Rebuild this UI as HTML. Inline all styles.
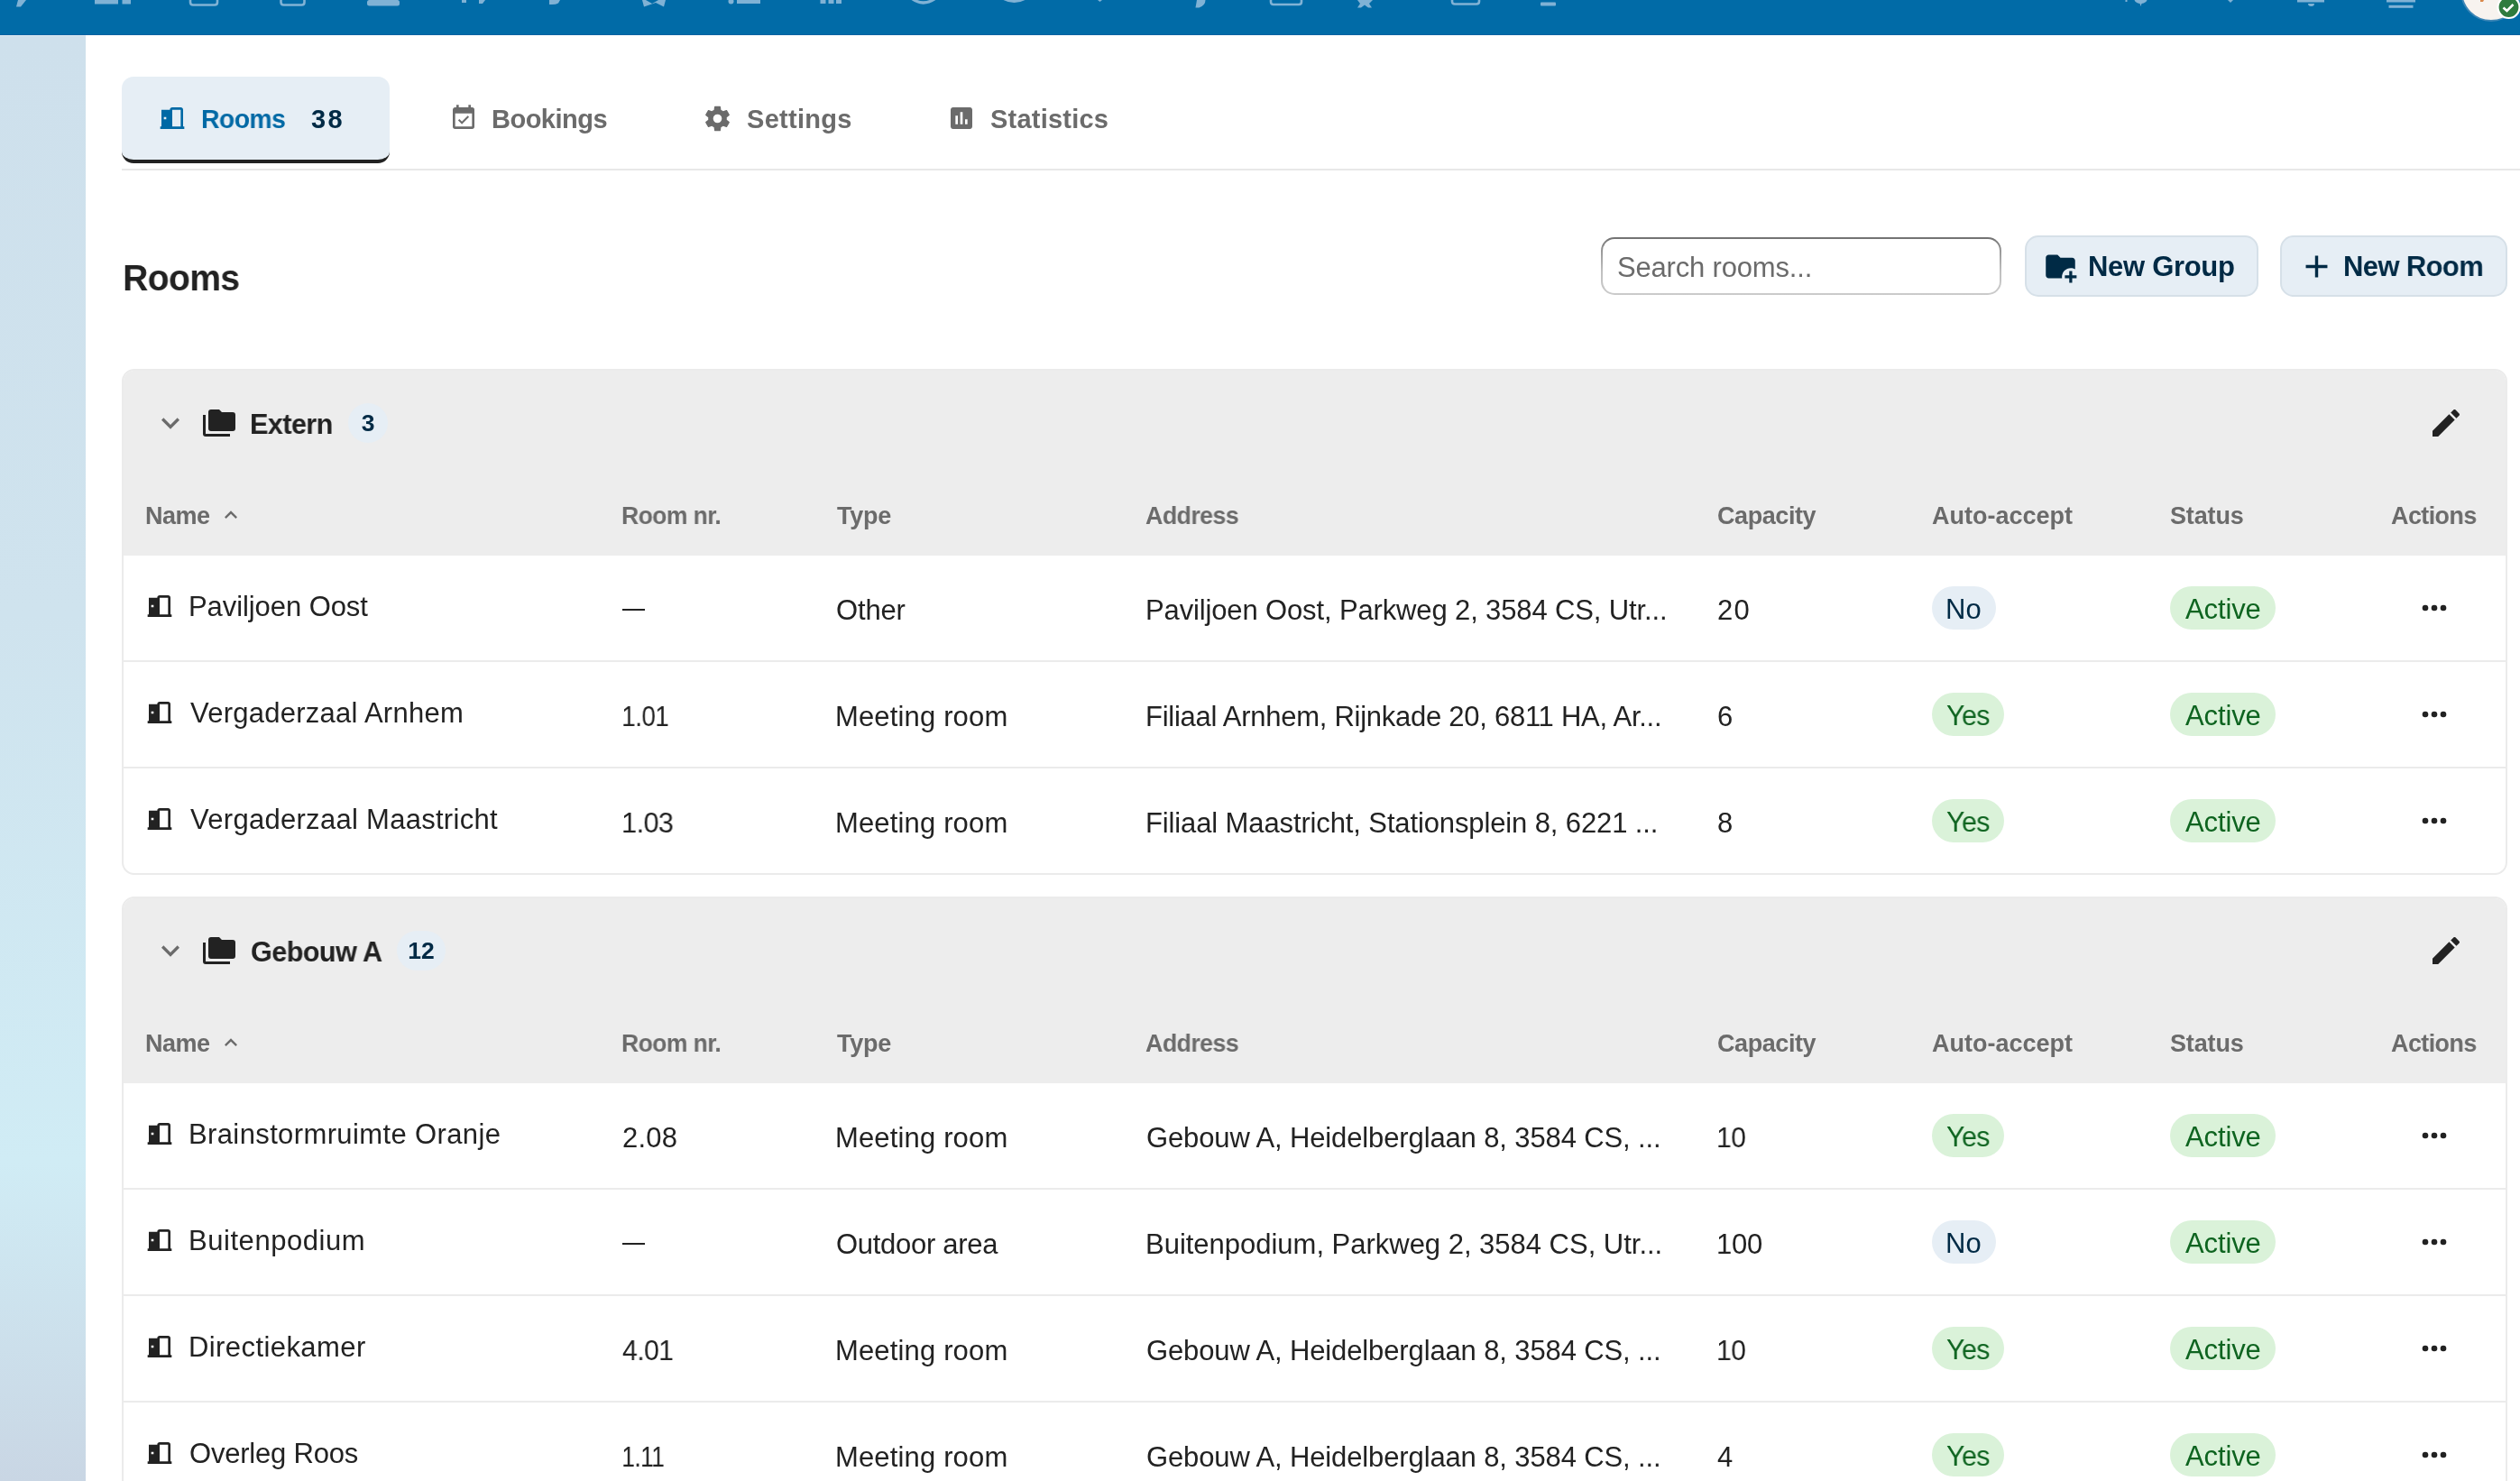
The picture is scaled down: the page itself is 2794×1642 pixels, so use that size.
<!DOCTYPE html><html><head><meta charset="utf-8"><style>
*{margin:0;padding:0;box-sizing:border-box}
html,body{width:2794px;height:1642px;overflow:hidden;background:#fff;font-family:"Liberation Sans", sans-serif}
.t{position:absolute;white-space:nowrap;will-change:transform}
.abs{position:absolute}
</style></head><body><div class="abs" style="left:0;top:0;width:2794px;height:39px;background:#016ba7;border-bottom:1px solid #0462a2"></div>
<svg class="abs" style="left:0;top:0" width="2794" height="38" viewBox="0 0 2794 38"><g fill="#80b2d5" stroke="none"><path d="M20 0H29L23 7.5H18L20 0Z"/><rect x="105" y="0" width="26" height="4.5"/><rect x="135.5" y="0" width="9.5" height="4.5"/><rect x="407" y="0" width="36" height="6.5" rx="2.5"/><path d="M512 0h5v3h-5z M531 0h7l-3 4h-4z"/><path d="M609 0h12l-2 3.5q-3 2 -10 1.5z"/><path d="M712 0h4l7 4l7-4h8l-2 7.6l-9-4.5l-13 4.5z"/><circle cx="810.5" cy="1.5" r="3"/><rect x="817" y="0" width="26" height="4"/><rect x="909.5" y="0" width="6" height="4"/><rect x="918.5" y="0" width="6" height="4"/><rect x="927" y="0" width="6" height="4"/><path d="M1217 0h5l-2.5 2z"/><path d="M1327 0h9.5q0 6 -7 8.5h-4z"/><path d="M1505 0h17l-4 4l3 4.5h-4l-4-3l-4 3h-4l3-4.5z"/><rect x="1708" y="2.5" width="17" height="4" rx="1"/><path d="M2366.5 0h14q-1 3 -6 4l-1 3l-1-3q-5-1 -6-4z"/><rect x="2356.5" y="0" width="2" height="2"/><path d="M2470 0h6l-3 3z"/><rect x="2547" y="0" width="30" height="2.5"/><path d="M2559 4h7q0 3 -3.5 3q-3.5 0 -3.5 -3z"/><rect x="2646" y="0" width="32" height="2.5"/><rect x="2648.5" y="5.8" width="27" height="3"/></g><g fill="none" stroke="#80b2d5" stroke-width="2.6"><path d="M211 0v2.5q0 3 3 3h24q3 0 3-3v-2.5"/><path d="M311.5 0v2.5q0 3 3 3h20q3 0 3-3v-2.5"/><path d="M1409 0v2q0 3 3 3h28q3 0 3-3v-2"/><path d="M1610 0v1.5q0 3 3 3h24q3 0 3-3v-1.5"/><path d="M1010.5 -2q13 10 27 0" stroke-width="3.2"/><path d="M1110.5 -3q14 9 28 0" stroke-width="3.2"/></g><circle cx="2762" cy="-10" r="33" fill="#f7f3ef" stroke="#3d86b6" stroke-width="2"/><path d="M2750 0h4l-1 2h-3z" fill="#d9884a"/><circle cx="2781.5" cy="8" r="12" fill="#2e7b3e" stroke="#fff" stroke-width="2.2"/><path d="M2775.5 8.5l4 3.5l7-7" fill="none" stroke="#fff" stroke-width="2.6"/></svg>
<div class="abs" style="left:0;top:39px;width:95px;height:1603px;border-top:1px solid #dde9f2;background:linear-gradient(180deg,#cee0ec 0%,#cfe3ee 40%,#d0ecf5 78%,#c9d6e4 100%)"></div>
<div class="abs" style="left:135px;top:85px;width:297px;height:96px;background:#e6eef5;border-radius:13px;border-bottom:4px solid #222"></div>
<svg style="position:absolute;left:175px;top:115px;width:32px;height:32px" viewBox="0 0 24 24"><path fill="#0069a5" d="M12,3C10.89,3 10,3.89 10,5H3V19H2V21H22V19H21V5C21,3.89 20.1,3 19,3H12M12,5H19V19H12V5M5,11H7V13H5V11Z"/></svg>
<div class="t" style="left:222.6px;top:117.5px;font-size:29px;line-height:29px;color:#0069a5;font-weight:700;letter-spacing:-0.600px;transform:scaleX(0.9786);transform-origin:2px 0;">Rooms</div>
<div class="t" style="left:345px;top:117.5px;font-size:29px;line-height:29px;color:#002a45;font-weight:700;letter-spacing:2.400px;">38</div>
<svg style="position:absolute;left:498px;top:115px;width:32px;height:32px" viewBox="0 0 24 24"><path fill="#6b6b6b" d="M19 19H5V8H19M19 3H18V1H16V3H8V1H6V3H5C3.89 3 3 3.9 3 5V19A2 2 0 0 0 5 21H19A2 2 0 0 0 21 19V5A2 2 0 0 0 19 3M16.53 11.06L15.47 10L10.59 14.88L8.47 12.76L7.41 13.82L10.59 17L16.53 11.06Z"/></svg>
<div class="t" style="left:545.3px;top:117.5px;font-size:29px;line-height:29px;color:#6b6b6b;font-weight:700;letter-spacing:-0.514px;">Bookings</div>
<svg style="position:absolute;left:779px;top:115px;width:33px;height:33px" viewBox="0 0 24 24"><path fill="#6b6b6b" d="M12,15.5A3.5,3.5 0 0,1 8.5,12A3.5,3.5 0 0,1 12,8.5A3.5,3.5 0 0,1 15.5,12A3.5,3.5 0 0,1 12,15.5M19.43,12.97C19.47,12.65 19.5,12.33 19.5,12C19.5,11.67 19.47,11.34 19.43,11L21.54,9.37C21.73,9.22 21.78,8.95 21.66,8.73L19.66,5.27C19.54,5.05 19.27,4.96 19.05,5.05L16.56,6.05C16.04,5.66 15.5,5.32 14.87,5.07L14.5,2.42C14.46,2.18 14.25,2 14,2H10C9.75,2 9.54,2.18 9.5,2.42L9.13,5.07C8.5,5.32 7.96,5.66 7.44,6.05L4.95,5.05C4.73,4.96 4.46,5.05 4.34,5.27L2.34,8.73C2.21,8.95 2.27,9.22 2.46,9.37L4.57,11C4.53,11.34 4.5,11.67 4.5,12C4.5,12.33 4.53,12.65 4.57,12.97L2.46,14.63C2.27,14.78 2.21,15.05 2.34,15.27L4.34,18.73C4.46,18.95 4.73,19.03 4.95,18.95L7.44,17.94C7.96,18.34 8.5,18.68 9.13,18.93L9.5,21.58C9.54,21.82 9.75,22 10,22H14C14.25,22 14.46,21.82 14.5,21.58L14.87,18.93C15.5,18.67 16.04,18.34 16.56,17.94L19.05,18.95C19.27,19.03 19.54,18.95 19.66,18.73L21.66,15.27C21.78,15.05 21.73,14.78 21.54,14.63L19.43,12.97Z"/></svg>
<div class="t" style="left:828px;top:117.5px;font-size:29px;line-height:29px;color:#6b6b6b;font-weight:700;letter-spacing:0.286px;">Settings</div>
<svg style="position:absolute;left:1050px;top:115px;width:32px;height:32px" viewBox="0 0 24 24"><path fill="#6b6b6b" d="M9 17H7V10H9V17M13 17H11V7H13V17M17 17H15V13H17V17M19 3H5C3.9 3 3 3.9 3 5V19C3 20.1 3.9 21 5 21H19C20.1 21 21 20.1 21 19V5C21 3.9 20.1 3 19 3Z"/></svg>
<div class="t" style="left:1098px;top:117.5px;font-size:29px;line-height:29px;color:#6b6b6b;font-weight:700;letter-spacing:0.222px;">Statistics</div>
<div class="abs" style="left:135px;top:187px;width:2659px;height:2px;background:#e8e8e8"></div>
<div class="t" style="left:135.8px;top:287.9px;font-size:41px;line-height:41px;color:#222;font-weight:700;letter-spacing:-0.600px;transform:scaleX(0.9510);transform-origin:3px 0;">Rooms</div>
<div class="abs" style="left:1775px;top:263px;width:444px;height:64px;border-radius:15px;background:linear-gradient(180deg,#717171 0%,#9a9a9a 25%,#c0c0c0 60%,#cbcbcb 100%)"><div class="abs" style="left:2px;top:2px;right:2px;bottom:2px;border-radius:13px;background:#fff"></div></div>
<div class="t" style="left:1792.5px;top:280.8px;font-size:31px;line-height:31px;color:#6b6b6b;font-weight:400;letter-spacing:-0.179px;">Search rooms...</div>
<div class="abs" style="left:2245px;top:261px;width:259px;height:68px;border:2px solid #d6e0e8;border-radius:15px;background:#e6eef5"></div>
<svg style="position:absolute;left:2265px;top:276px;width:39px;height:39px" viewBox="0 0 24 24"><path fill="#002a45" d="M13 19C13 19.34 13.04 19.67 13.09 20H4C2.9 20 2 19.11 2 18V6C2 4.89 2.89 4 4 4H10L12 6H20C21.1 6 22 6.89 22 8V13.81C21.12 13.3 20.1 13 19 13C15.690 13 13 15.69 13 19M20 18V15H18V18H15V20H18V23H20V20H23V18H20Z"/></svg>
<div class="t" style="left:2315px;top:279.8px;font-size:31px;line-height:31px;color:#002a45;font-weight:700;letter-spacing:-0.300px;">New Group</div>
<div class="abs" style="left:2528px;top:261px;width:252px;height:68px;border:2px solid #d6e0e8;border-radius:15px;background:#e6eef5"></div>
<svg style="position:absolute;left:2548px;top:275px;width:41px;height:41px" viewBox="0 0 24 24"><path fill="#002a45" d="M19,13H13V19H11V13H5V11H11V5H13V11H19V13Z"/></svg>
<div class="t" style="left:2597.75px;top:279.8px;font-size:31px;line-height:31px;color:#002a45;font-weight:700;letter-spacing:-0.600px;transform:scaleX(0.9980);transform-origin:2px 0;">New Room</div>
<div class="abs" style="left:135px;top:409px;width:2645px;height:560.5px;border:2px solid #ebebeb;border-radius:14px;background:#fff;overflow:hidden"><div class="abs" style="left:0;top:0;width:100%;height:204.5px;background:#ededed"></div></div>
<svg style="position:absolute;left:169px;top:449px;width:40px;height:40px" viewBox="0 0 24 24"><path fill="#6b6b6b" d="M7.41,8.58L12,13.17L16.59,8.58L18,10L12,16L6,10L7.41,8.58Z"/></svg>
<svg style="position:absolute;left:225px;top:451px;width:36px;height:36px" viewBox="0 0 24 24"><path fill="#222" d="M22,4H14L12,2H6A2,2 0 0,0 4,4V16A2,2 0 0,0 6,18H22A2,2 0 0,0 24,16V6A2,2 0 0,0 22,4M2,6H0V11H0V20A2,2 0 0,0 2,22H20V20H2V6Z"/></svg>
<div class="t" style="left:277px;top:454.8px;font-size:31px;line-height:31px;color:#222;font-weight:700;letter-spacing:-0.600px;transform:scaleX(0.9879);transform-origin:2px 0;">Extern</div>
<div class="abs" style="left:386px;top:447px;width:44px;height:44px;border-radius:22px;background:#e6eef5"></div>
<div class="t" style="left:386px;top:447px;width:44px;height:44px;line-height:44px;text-align:center;font-size:26.5px;font-weight:700;color:#002a45">3</div>
<svg style="position:absolute;left:2692px;top:449px;width:40px;height:40px" viewBox="0 0 24 24"><path fill="#222" d="M20.71,7.04C21.1,6.65 21.1,6 20.71,5.63L18.37,3.29C18,2.9 17.35,2.9 16.96,3.29L15.12,5.12L18.87,8.87M3,17.25V21H6.75L17.81,9.93L14.06,6.18L3,17.25Z"/></svg>
<div class="t" style="left:160.9px;top:559.1px;font-size:27px;line-height:27px;color:#6b6b6b;font-weight:700;letter-spacing:-0.533px;">Name</div>
<div class="t" style="left:688.6px;top:559.1px;font-size:27px;line-height:27px;color:#6b6b6b;font-weight:700;letter-spacing:-0.600px;transform:scaleX(0.9819);transform-origin:2px 0;">Room nr.</div>
<div class="t" style="left:928px;top:559.1px;font-size:27px;line-height:27px;color:#6b6b6b;font-weight:700;letter-spacing:-0.233px;">Type</div>
<div class="t" style="left:1270px;top:559.1px;font-size:27px;line-height:27px;color:#6b6b6b;font-weight:700;letter-spacing:-0.600px;transform:scaleX(0.9923);transform-origin:1px 0;">Address</div>
<div class="t" style="left:1904px;top:559.1px;font-size:27px;line-height:27px;color:#6b6b6b;font-weight:700;letter-spacing:-0.429px;">Capacity</div>
<div class="t" style="left:2141.7px;top:559.1px;font-size:27px;line-height:27px;color:#6b6b6b;font-weight:700;letter-spacing:0.000px;">Auto-accept</div>
<div class="t" style="left:2405.5px;top:559.1px;font-size:27px;line-height:27px;color:#6b6b6b;font-weight:700;letter-spacing:-0.140px;">Status</div>
<div class="t" style="left:2650.6px;top:559.1px;font-size:27px;line-height:27px;color:#6b6b6b;font-weight:700;letter-spacing:-0.600px;transform:scaleX(0.9979);transform-origin:1px 0;">Actions</div>
<svg style="position:absolute;left:242px;top:557px;width:28px;height:28px" viewBox="0 0 24 24"><path fill="#6b6b6b" d="M7.41,15.41L12,10.83L16.59,15.41L18,14L12,8L6,14L7.41,15.41Z"/></svg>
<div class="abs" style="left:137px;top:731.5px;width:2641px;height:2px;background:#ebebeb"></div>
<svg style="position:absolute;left:160.5px;top:655.5px;width:32px;height:32px" viewBox="0 0 24 24"><path fill="#222" d="M12,3C10.89,3 10,3.89 10,5H3V19H2V21H22V19H21V5C21,3.89 20.1,3 19,3H12M12,5H19V19H12V5M5,11H7V13H5V11Z"/></svg>
<div class="t" style="left:209px;top:656.5px;font-size:31px;line-height:31px;color:#222;font-weight:400;letter-spacing:-0.077px;">Paviljoen Oost</div>
<div class="abs" style="left:690px;top:675.0px;width:24.5px;height:2.4px;background:#222"></div>
<div class="t" style="left:927px;top:660.8px;font-size:31px;line-height:31px;color:#222;font-weight:400;letter-spacing:-0.175px;">Other</div>
<div class="t" style="left:1269.6px;top:660.8px;font-size:31px;line-height:31px;color:#222;font-weight:400;letter-spacing:-0.137px;">Paviljoen Oost, Parkweg 2, 3584 CS, Utr...</div>
<div class="t" style="left:1904px;top:660.8px;font-size:31px;line-height:31px;color:#222;font-weight:400;letter-spacing:1.200px;">20</div>
<div class="abs" style="left:2142px;top:650.2px;width:71px;height:48px;border-radius:24px;background:#e6eef5"></div>
<div class="t" style="left:2157.2px;top:659.8px;font-size:31px;line-height:31px;color:#002a45;font-weight:400;letter-spacing:0.200px;">No</div>
<div class="abs" style="left:2406px;top:650.2px;width:117px;height:48px;border-radius:24px;background:#daf2d9"></div>
<div class="t" style="left:2422.8px;top:659.8px;font-size:31px;line-height:31px;color:#0e6420;font-weight:400;letter-spacing:-0.120px;">Active</div>
<svg style="position:absolute;left:2679px;top:654.0px;width:40px;height:40px" viewBox="0 0 24 24"><path fill="#222" d="M16,12A2,2 0 0,1 18,10A2,2 0 0,1 20,12A2,2 0 0,1 18,14A2,2 0 0,1 16,12M10,12A2,2 0 0,1 12,10A2,2 0 0,1 14,12A2,2 0 0,1 12,14A2,2 0 0,1 10,12M4,12A2,2 0 0,1 6,10A2,2 0 0,1 8,12A2,2 0 0,1 6,14A2,2 0 0,1 4,12Z"/></svg>
<div class="abs" style="left:137px;top:849.5px;width:2641px;height:2px;background:#ebebeb"></div>
<svg style="position:absolute;left:160.5px;top:773.5px;width:32px;height:32px" viewBox="0 0 24 24"><path fill="#222" d="M12,3C10.89,3 10,3.89 10,5H3V19H2V21H22V19H21V5C21,3.89 20.1,3 19,3H12M12,5H19V19H12V5M5,11H7V13H5V11Z"/></svg>
<div class="t" style="left:211px;top:774.5px;font-size:31px;line-height:31px;color:#222;font-weight:400;letter-spacing:0.256px;">Vergaderzaal Arnhem</div>
<div class="t" style="left:688.6px;top:778.8px;font-size:31px;line-height:31px;color:#222;font-weight:400;letter-spacing:-0.600px;transform:scaleX(0.8986);transform-origin:2px 0;">1.01</div>
<div class="t" style="left:926px;top:778.8px;font-size:31px;line-height:31px;color:#222;font-weight:400;letter-spacing:0.155px;">Meeting room</div>
<div class="t" style="left:1269.6px;top:778.8px;font-size:31px;line-height:31px;color:#222;font-weight:400;letter-spacing:-0.262px;">Filiaal Arnhem, Rijnkade 20, 6811 HA, Ar...</div>
<div class="t" style="left:1904px;top:778.8px;font-size:31px;line-height:31px;color:#222;font-weight:400;">6</div>
<div class="abs" style="left:2142px;top:768.2px;width:80px;height:48px;border-radius:24px;background:#daf2d9"></div>
<div class="t" style="left:2158px;top:777.8px;font-size:31px;line-height:31px;color:#0e6420;font-weight:400;letter-spacing:-0.600px;transform:scaleX(0.9833);transform-origin:1px 0;">Yes</div>
<div class="abs" style="left:2406px;top:768.2px;width:117px;height:48px;border-radius:24px;background:#daf2d9"></div>
<div class="t" style="left:2422.8px;top:777.8px;font-size:31px;line-height:31px;color:#0e6420;font-weight:400;letter-spacing:-0.120px;">Active</div>
<svg style="position:absolute;left:2679px;top:772.0px;width:40px;height:40px" viewBox="0 0 24 24"><path fill="#222" d="M16,12A2,2 0 0,1 18,10A2,2 0 0,1 20,12A2,2 0 0,1 18,14A2,2 0 0,1 16,12M10,12A2,2 0 0,1 12,10A2,2 0 0,1 14,12A2,2 0 0,1 12,14A2,2 0 0,1 10,12M4,12A2,2 0 0,1 6,10A2,2 0 0,1 8,12A2,2 0 0,1 6,14A2,2 0 0,1 4,12Z"/></svg>
<svg style="position:absolute;left:160.5px;top:891.5px;width:32px;height:32px" viewBox="0 0 24 24"><path fill="#222" d="M12,3C10.89,3 10,3.89 10,5H3V19H2V21H22V19H21V5C21,3.89 20.1,3 19,3H12M12,5H19V19H12V5M5,11H7V13H5V11Z"/></svg>
<div class="t" style="left:211px;top:892.5px;font-size:31px;line-height:31px;color:#222;font-weight:400;letter-spacing:0.286px;">Vergaderzaal Maastricht</div>
<div class="t" style="left:688.6px;top:896.8px;font-size:31px;line-height:31px;color:#222;font-weight:400;letter-spacing:-0.600px;transform:scaleX(0.9893);transform-origin:2px 0;">1.03</div>
<div class="t" style="left:926px;top:896.8px;font-size:31px;line-height:31px;color:#222;font-weight:400;letter-spacing:0.155px;">Meeting room</div>
<div class="t" style="left:1269.6px;top:896.8px;font-size:31px;line-height:31px;color:#222;font-weight:400;letter-spacing:-0.123px;">Filiaal Maastricht, Stationsplein 8, 6221 ...</div>
<div class="t" style="left:1904px;top:896.8px;font-size:31px;line-height:31px;color:#222;font-weight:400;">8</div>
<div class="abs" style="left:2142px;top:886.2px;width:80px;height:48px;border-radius:24px;background:#daf2d9"></div>
<div class="t" style="left:2158px;top:895.8px;font-size:31px;line-height:31px;color:#0e6420;font-weight:400;letter-spacing:-0.600px;transform:scaleX(0.9833);transform-origin:1px 0;">Yes</div>
<div class="abs" style="left:2406px;top:886.2px;width:117px;height:48px;border-radius:24px;background:#daf2d9"></div>
<div class="t" style="left:2422.8px;top:895.8px;font-size:31px;line-height:31px;color:#0e6420;font-weight:400;letter-spacing:-0.120px;">Active</div>
<svg style="position:absolute;left:2679px;top:890.0px;width:40px;height:40px" viewBox="0 0 24 24"><path fill="#222" d="M16,12A2,2 0 0,1 18,10A2,2 0 0,1 20,12A2,2 0 0,1 18,14A2,2 0 0,1 16,12M10,12A2,2 0 0,1 12,10A2,2 0 0,1 14,12A2,2 0 0,1 12,14A2,2 0 0,1 10,12M4,12A2,2 0 0,1 6,10A2,2 0 0,1 8,12A2,2 0 0,1 6,14A2,2 0 0,1 4,12Z"/></svg>
<div class="abs" style="left:135px;top:994px;width:2645px;height:678.5px;border:2px solid #ebebeb;border-radius:14px;background:#fff;overflow:hidden"><div class="abs" style="left:0;top:0;width:100%;height:204.5px;background:#ededed"></div></div>
<svg style="position:absolute;left:169px;top:1034px;width:40px;height:40px" viewBox="0 0 24 24"><path fill="#6b6b6b" d="M7.41,8.58L12,13.17L16.59,8.58L18,10L12,16L6,10L7.41,8.58Z"/></svg>
<svg style="position:absolute;left:225px;top:1036px;width:36px;height:36px" viewBox="0 0 24 24"><path fill="#222" d="M22,4H14L12,2H6A2,2 0 0,0 4,4V16A2,2 0 0,0 6,18H22A2,2 0 0,0 24,16V6A2,2 0 0,0 22,4M2,6H0V11H0V20A2,2 0 0,0 2,22H20V20H2V6Z"/></svg>
<div class="t" style="left:278px;top:1039.8px;font-size:31px;line-height:31px;color:#222;font-weight:700;letter-spacing:-0.600px;transform:scaleX(0.9877);transform-origin:1px 0;">Gebouw A</div>
<div class="abs" style="left:439.6px;top:1032px;width:54px;height:44px;border-radius:22px;background:#e6eef5"></div>
<div class="t" style="left:439.6px;top:1032px;width:54px;height:44px;line-height:44px;text-align:center;font-size:26.5px;font-weight:700;color:#002a45">12</div>
<svg style="position:absolute;left:2692px;top:1034px;width:40px;height:40px" viewBox="0 0 24 24"><path fill="#222" d="M20.71,7.04C21.1,6.65 21.1,6 20.71,5.63L18.37,3.29C18,2.9 17.35,2.9 16.96,3.29L15.12,5.12L18.87,8.87M3,17.25V21H6.75L17.81,9.93L14.06,6.18L3,17.25Z"/></svg>
<div class="t" style="left:160.9px;top:1144.1px;font-size:27px;line-height:27px;color:#6b6b6b;font-weight:700;letter-spacing:-0.533px;">Name</div>
<div class="t" style="left:688.6px;top:1144.1px;font-size:27px;line-height:27px;color:#6b6b6b;font-weight:700;letter-spacing:-0.600px;transform:scaleX(0.9819);transform-origin:2px 0;">Room nr.</div>
<div class="t" style="left:928px;top:1144.1px;font-size:27px;line-height:27px;color:#6b6b6b;font-weight:700;letter-spacing:-0.233px;">Type</div>
<div class="t" style="left:1270px;top:1144.1px;font-size:27px;line-height:27px;color:#6b6b6b;font-weight:700;letter-spacing:-0.600px;transform:scaleX(0.9923);transform-origin:1px 0;">Address</div>
<div class="t" style="left:1904px;top:1144.1px;font-size:27px;line-height:27px;color:#6b6b6b;font-weight:700;letter-spacing:-0.429px;">Capacity</div>
<div class="t" style="left:2141.7px;top:1144.1px;font-size:27px;line-height:27px;color:#6b6b6b;font-weight:700;letter-spacing:0.000px;">Auto-accept</div>
<div class="t" style="left:2405.5px;top:1144.1px;font-size:27px;line-height:27px;color:#6b6b6b;font-weight:700;letter-spacing:-0.140px;">Status</div>
<div class="t" style="left:2650.6px;top:1144.1px;font-size:27px;line-height:27px;color:#6b6b6b;font-weight:700;letter-spacing:-0.600px;transform:scaleX(0.9979);transform-origin:1px 0;">Actions</div>
<svg style="position:absolute;left:242px;top:1142px;width:28px;height:28px" viewBox="0 0 24 24"><path fill="#6b6b6b" d="M7.41,15.41L12,10.83L16.59,15.41L18,14L12,8L6,14L7.41,15.41Z"/></svg>
<div class="abs" style="left:137px;top:1316.5px;width:2641px;height:2px;background:#ebebeb"></div>
<svg style="position:absolute;left:160.5px;top:1240.5px;width:32px;height:32px" viewBox="0 0 24 24"><path fill="#222" d="M12,3C10.89,3 10,3.89 10,5H3V19H2V21H22V19H21V5C21,3.89 20.1,3 19,3H12M12,5H19V19H12V5M5,11H7V13H5V11Z"/></svg>
<div class="t" style="left:209px;top:1241.5px;font-size:31px;line-height:31px;color:#222;font-weight:400;letter-spacing:0.377px;">Brainstormruimte Oranje</div>
<div class="t" style="left:689.6px;top:1245.8px;font-size:31px;line-height:31px;color:#222;font-weight:400;letter-spacing:0.200px;">2.08</div>
<div class="t" style="left:926px;top:1245.8px;font-size:31px;line-height:31px;color:#222;font-weight:400;letter-spacing:0.155px;">Meeting room</div>
<div class="t" style="left:1270.6px;top:1245.8px;font-size:31px;line-height:31px;color:#222;font-weight:400;letter-spacing:-0.128px;">Gebouw A, Heidelberglaan 8, 3584 CS, ...</div>
<div class="t" style="left:1903px;top:1245.8px;font-size:31px;line-height:31px;color:#222;font-weight:400;letter-spacing:-0.600px;transform:scaleX(0.9650);transform-origin:2px 0;">10</div>
<div class="abs" style="left:2142px;top:1235.2px;width:80px;height:48px;border-radius:24px;background:#daf2d9"></div>
<div class="t" style="left:2158px;top:1244.8px;font-size:31px;line-height:31px;color:#0e6420;font-weight:400;letter-spacing:-0.600px;transform:scaleX(0.9833);transform-origin:1px 0;">Yes</div>
<div class="abs" style="left:2406px;top:1235.2px;width:117px;height:48px;border-radius:24px;background:#daf2d9"></div>
<div class="t" style="left:2422.8px;top:1244.8px;font-size:31px;line-height:31px;color:#0e6420;font-weight:400;letter-spacing:-0.120px;">Active</div>
<svg style="position:absolute;left:2679px;top:1239.0px;width:40px;height:40px" viewBox="0 0 24 24"><path fill="#222" d="M16,12A2,2 0 0,1 18,10A2,2 0 0,1 20,12A2,2 0 0,1 18,14A2,2 0 0,1 16,12M10,12A2,2 0 0,1 12,10A2,2 0 0,1 14,12A2,2 0 0,1 12,14A2,2 0 0,1 10,12M4,12A2,2 0 0,1 6,10A2,2 0 0,1 8,12A2,2 0 0,1 6,14A2,2 0 0,1 4,12Z"/></svg>
<div class="abs" style="left:137px;top:1434.5px;width:2641px;height:2px;background:#ebebeb"></div>
<svg style="position:absolute;left:160.5px;top:1358.5px;width:32px;height:32px" viewBox="0 0 24 24"><path fill="#222" d="M12,3C10.89,3 10,3.89 10,5H3V19H2V21H22V19H21V5C21,3.89 20.1,3 19,3H12M12,5H19V19H12V5M5,11H7V13H5V11Z"/></svg>
<div class="t" style="left:209px;top:1359.5px;font-size:31px;line-height:31px;color:#222;font-weight:400;letter-spacing:0.545px;">Buitenpodium</div>
<div class="abs" style="left:690px;top:1378.0px;width:24.5px;height:2.4px;background:#222"></div>
<div class="t" style="left:927px;top:1363.8px;font-size:31px;line-height:31px;color:#222;font-weight:400;letter-spacing:-0.300px;">Outdoor area</div>
<div class="t" style="left:1269.6px;top:1363.8px;font-size:31px;line-height:31px;color:#222;font-weight:400;letter-spacing:-0.015px;">Buitenpodium, Parkweg 2, 3584 CS, Utr...</div>
<div class="t" style="left:1903px;top:1363.8px;font-size:31px;line-height:31px;color:#222;font-weight:400;letter-spacing:-0.300px;">100</div>
<div class="abs" style="left:2142px;top:1353.2px;width:71px;height:48px;border-radius:24px;background:#e6eef5"></div>
<div class="t" style="left:2157.2px;top:1362.8px;font-size:31px;line-height:31px;color:#002a45;font-weight:400;letter-spacing:0.200px;">No</div>
<div class="abs" style="left:2406px;top:1353.2px;width:117px;height:48px;border-radius:24px;background:#daf2d9"></div>
<div class="t" style="left:2422.8px;top:1362.8px;font-size:31px;line-height:31px;color:#0e6420;font-weight:400;letter-spacing:-0.120px;">Active</div>
<svg style="position:absolute;left:2679px;top:1357.0px;width:40px;height:40px" viewBox="0 0 24 24"><path fill="#222" d="M16,12A2,2 0 0,1 18,10A2,2 0 0,1 20,12A2,2 0 0,1 18,14A2,2 0 0,1 16,12M10,12A2,2 0 0,1 12,10A2,2 0 0,1 14,12A2,2 0 0,1 12,14A2,2 0 0,1 10,12M4,12A2,2 0 0,1 6,10A2,2 0 0,1 8,12A2,2 0 0,1 6,14A2,2 0 0,1 4,12Z"/></svg>
<div class="abs" style="left:137px;top:1552.5px;width:2641px;height:2px;background:#ebebeb"></div>
<svg style="position:absolute;left:160.5px;top:1476.5px;width:32px;height:32px" viewBox="0 0 24 24"><path fill="#222" d="M12,3C10.89,3 10,3.89 10,5H3V19H2V21H22V19H21V5C21,3.89 20.1,3 19,3H12M12,5H19V19H12V5M5,11H7V13H5V11Z"/></svg>
<div class="t" style="left:209px;top:1477.5px;font-size:31px;line-height:31px;color:#222;font-weight:400;letter-spacing:0.417px;">Directiekamer</div>
<div class="t" style="left:689.6px;top:1481.8px;font-size:31px;line-height:31px;color:#222;font-weight:400;letter-spacing:-0.600px;transform:scaleX(0.9720);transform-origin:1px 0;">4.01</div>
<div class="t" style="left:926px;top:1481.8px;font-size:31px;line-height:31px;color:#222;font-weight:400;letter-spacing:0.155px;">Meeting room</div>
<div class="t" style="left:1270.6px;top:1481.8px;font-size:31px;line-height:31px;color:#222;font-weight:400;letter-spacing:-0.128px;">Gebouw A, Heidelberglaan 8, 3584 CS, ...</div>
<div class="t" style="left:1903px;top:1481.8px;font-size:31px;line-height:31px;color:#222;font-weight:400;letter-spacing:-0.600px;transform:scaleX(0.9650);transform-origin:2px 0;">10</div>
<div class="abs" style="left:2142px;top:1471.2px;width:80px;height:48px;border-radius:24px;background:#daf2d9"></div>
<div class="t" style="left:2158px;top:1480.8px;font-size:31px;line-height:31px;color:#0e6420;font-weight:400;letter-spacing:-0.600px;transform:scaleX(0.9833);transform-origin:1px 0;">Yes</div>
<div class="abs" style="left:2406px;top:1471.2px;width:117px;height:48px;border-radius:24px;background:#daf2d9"></div>
<div class="t" style="left:2422.8px;top:1480.8px;font-size:31px;line-height:31px;color:#0e6420;font-weight:400;letter-spacing:-0.120px;">Active</div>
<svg style="position:absolute;left:2679px;top:1475.0px;width:40px;height:40px" viewBox="0 0 24 24"><path fill="#222" d="M16,12A2,2 0 0,1 18,10A2,2 0 0,1 20,12A2,2 0 0,1 18,14A2,2 0 0,1 16,12M10,12A2,2 0 0,1 12,10A2,2 0 0,1 14,12A2,2 0 0,1 12,14A2,2 0 0,1 10,12M4,12A2,2 0 0,1 6,10A2,2 0 0,1 8,12A2,2 0 0,1 6,14A2,2 0 0,1 4,12Z"/></svg>
<svg style="position:absolute;left:160.5px;top:1594.5px;width:32px;height:32px" viewBox="0 0 24 24"><path fill="#222" d="M12,3C10.89,3 10,3.89 10,5H3V19H2V21H22V19H21V5C21,3.89 20.1,3 19,3H12M12,5H19V19H12V5M5,11H7V13H5V11Z"/></svg>
<div class="t" style="left:210px;top:1595.5px;font-size:31px;line-height:31px;color:#222;font-weight:400;letter-spacing:-0.209px;">Overleg Roos</div>
<div class="t" style="left:688.6px;top:1599.8px;font-size:31px;line-height:31px;color:#222;font-weight:400;letter-spacing:-0.600px;transform:scaleX(0.8432);transform-origin:2px 0;">1.11</div>
<div class="t" style="left:926px;top:1599.8px;font-size:31px;line-height:31px;color:#222;font-weight:400;letter-spacing:0.155px;">Meeting room</div>
<div class="t" style="left:1270.6px;top:1599.8px;font-size:31px;line-height:31px;color:#222;font-weight:400;letter-spacing:-0.128px;">Gebouw A, Heidelberglaan 8, 3584 CS, ...</div>
<div class="t" style="left:1904px;top:1599.8px;font-size:31px;line-height:31px;color:#222;font-weight:400;">4</div>
<div class="abs" style="left:2142px;top:1589.2px;width:80px;height:48px;border-radius:24px;background:#daf2d9"></div>
<div class="t" style="left:2158px;top:1598.8px;font-size:31px;line-height:31px;color:#0e6420;font-weight:400;letter-spacing:-0.600px;transform:scaleX(0.9833);transform-origin:1px 0;">Yes</div>
<div class="abs" style="left:2406px;top:1589.2px;width:117px;height:48px;border-radius:24px;background:#daf2d9"></div>
<div class="t" style="left:2422.8px;top:1598.8px;font-size:31px;line-height:31px;color:#0e6420;font-weight:400;letter-spacing:-0.120px;">Active</div>
<svg style="position:absolute;left:2679px;top:1593.0px;width:40px;height:40px" viewBox="0 0 24 24"><path fill="#222" d="M16,12A2,2 0 0,1 18,10A2,2 0 0,1 20,12A2,2 0 0,1 18,14A2,2 0 0,1 16,12M10,12A2,2 0 0,1 12,10A2,2 0 0,1 14,12A2,2 0 0,1 12,14A2,2 0 0,1 10,12M4,12A2,2 0 0,1 6,10A2,2 0 0,1 8,12A2,2 0 0,1 6,14A2,2 0 0,1 4,12Z"/></svg></body></html>
